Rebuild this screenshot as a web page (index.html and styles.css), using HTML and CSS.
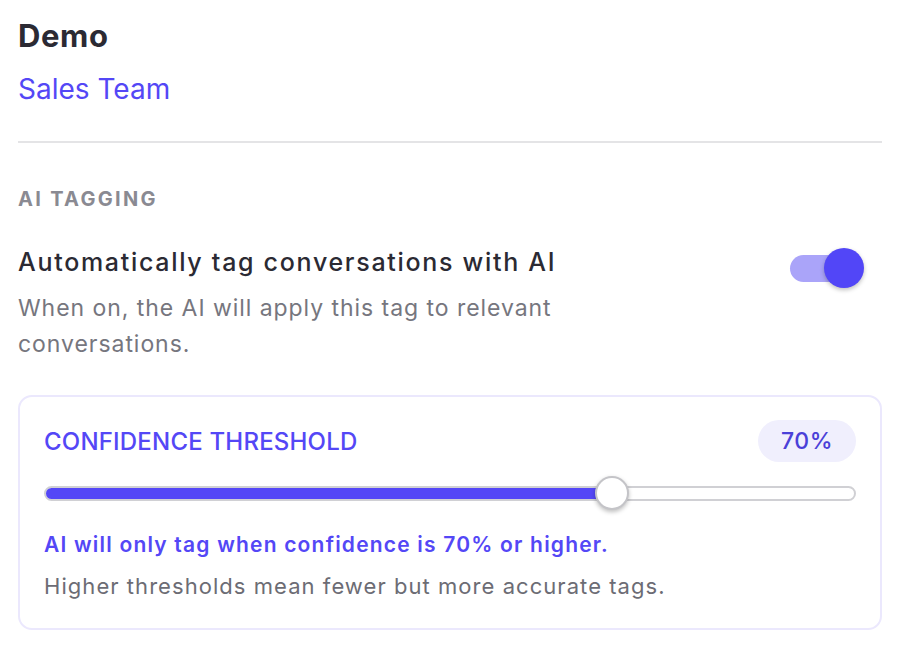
FILE: index.html
```html
<!DOCTYPE html>
<html>
<head>
<meta charset="utf-8">
<link rel="stylesheet" href="styles.css">
</head>
<body>
<div class="panel">
  <header class="head">
    <h1 class="title">Demo</h1>
    <div class="team">Sales Team</div>
  </header>
  <hr class="divider">
  <section class="section">
    <div class="section-label">AI TAGGING</div>
    <div class="setting">
      <div class="setting-text">
        <div class="setting-title">Automatically tag conversations with AI</div>
        <div class="setting-desc">When on, the AI will apply this tag to relevant conversations.</div>
      </div>
      <div class="toggle"><div class="toggle-track"></div><div class="toggle-knob"></div></div>
    </div>
    <div class="card">
      <div class="card-head">
        <div class="card-label">CONFIDENCE THRESHOLD</div>
        <div class="badge">70%</div>
      </div>
      <div class="slider">
        <div class="slider-track"><div class="slider-fill" style="width:70%"></div></div>
        <div class="slider-thumb" style="left:70%"></div>
      </div>
      <div class="note-strong">AI will only tag when confidence is 70% or higher.</div>
      <div class="note">Higher thresholds mean fewer but more accurate tags.</div>
    </div>
  </section>
</div>
</body>
</html>
```
FILE: styles.css
```css
* { box-sizing: border-box; }
html, body { margin: 0; padding: 0; background: #fff; }
body { font-family: Inter, "Noto Sans", sans-serif; color: #2a2a33; }
.panel { padding: 14px 28px 0 18px; width: 910px; }
.title { margin: 0; font-size: 31px; font-weight: 700; line-height: 44px; color: #2b2a33; letter-spacing: 0.6px; }
.team { font-size: 28px; line-height: 44px; color: #5447f6; margin-top: 9px; }
.divider { border: 0; height: 2px; background: #e4e4e6; margin: 30px 0 0; }
.section-label { margin-top: 44px; font-size: 20px; font-weight: 700; letter-spacing: 2.3px; color: #8a8a92; line-height: 24px; }
.setting { display: flex; justify-content: space-between; align-items: flex-start; margin-top: 36px; }
.setting-text { width: 580px; }
.setting-title { font-size: 25px; font-weight: 500; line-height: 30px; color: #2b2a33; letter-spacing: 1.7px; }
.setting-desc { font-size: 23px; line-height: 36px; color: #76767e; margin-top: 13px; letter-spacing: 0.95px; }
.toggle { position: relative; width: 74px; height: 40px; margin-top: 1px; margin-right: 18px; }
.toggle-track { position: absolute; left: 0; top: 7px; width: 56px; height: 27px; border-radius: 14px; background: #aaa4f9; }
.toggle-knob { position: absolute; left: 34px; top: 0; width: 40px; height: 40px; border-radius: 50%; background: #5246f7; box-shadow: 0 2px 4px rgba(0,0,0,0.25); }
.card { margin-top: 33px; border: 2px solid #ebe8fd; border-radius: 14px; padding: 23px 24px 28px 24px; }
.card-head { display: flex; justify-content: space-between; align-items: center; }
.card-label { font-size: 24px; font-weight: 500; color: #5447f6; letter-spacing: 0.2px; }
.badge { background: #f0effd; border-radius: 21px; height: 42px; width: 98px; display: flex; align-items: center; justify-content: center; font-size: 23px; font-weight: 500; color: #4a40d8; letter-spacing: 0.5px; }
.slider { position: relative; margin-top: 24px; height: 16px; }
.slider-track { height: 15px; border: 2px solid #d0d0d4; border-radius: 8px; background: #fff; overflow: hidden; position: relative; }
.slider-fill { position: absolute; left: -2px; top: -2px; bottom: -2px; background: #5447f6; border-radius: 8px 0 0 8px; }
.slider-thumb { position: absolute; top: -10px; width: 34px; height: 34px; margin-left: -17px; border-radius: 50%; background: #fff; border: 2px solid #c4c4c8; box-shadow: 0 2px 4px rgba(0,0,0,0.25); }
.note-strong { margin-top: 29px; font-size: 21px; font-weight: 600; color: #5447f6; line-height: 28px; letter-spacing: 1.2px; }
.note { margin-top: 13px; font-size: 22px; color: #6c6c74; line-height: 28px; letter-spacing: 1.05px; }
```
